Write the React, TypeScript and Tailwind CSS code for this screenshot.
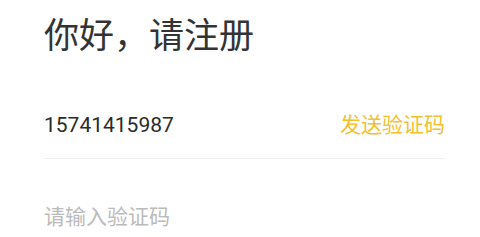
export default function App() {
  return (
    <div
      className="w-[480px] h-[237px] bg-white overflow-hidden pl-[44px] pr-[35px]"
      style={{ fontFamily: 'Roboto, "Noto Sans CJK SC", sans-serif' }}
    >
      <h1 className="pt-[17px] text-[35px] leading-[40px] text-[#333333]">你好，请注册</h1>
      <div className="mt-[56px] flex items-center justify-between border-b border-[#f0f0f0] pb-[21px]">
        <span className="text-[21px] leading-[24px] text-[#2a2a2a]">15741415987</span>
        <button className="text-[21px] leading-[24px] text-[#f3c02e]">发送验证码</button>
      </div>
      <input
        className="mt-[46px] w-full text-[21px] leading-[24px] outline-none placeholder:text-[#bbbbbb]"
        placeholder="请输入验证码"
      />
    </div>
  );
}
